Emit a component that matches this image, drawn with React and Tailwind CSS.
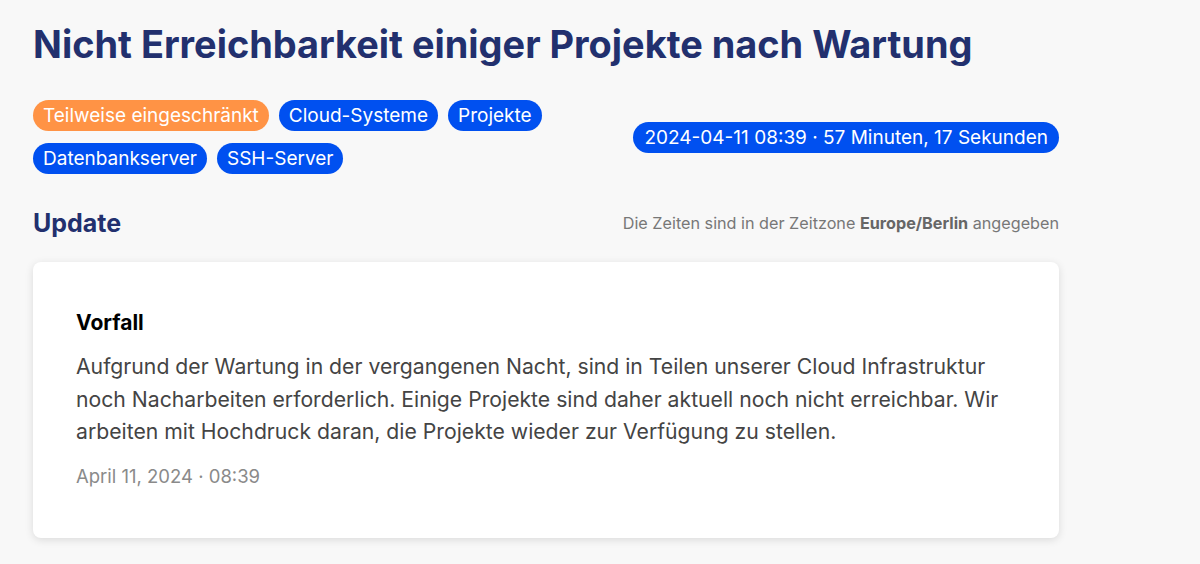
export default function App() {
    const tags = [
        { label: 'Teilweise eingeschränkt', cls: 'bg-[#ff9345]' },
        { label: 'Cloud-Systeme', cls: 'bg-[#0050f0]' },
        { label: 'Projekte', cls: 'bg-[#0050f0]' },
        { label: 'Datenbankserver', cls: 'bg-[#0050f0]' },
        { label: 'SSH-Server', cls: 'bg-[#0050f0]' },
    ];

    return (
        <div className="min-h-[564px] bg-[#f8f8f8] font-['Inter',sans-serif]">
            <div className="w-[1026px] ml-[33px] pt-[20px]">
                <h1 className="text-[37.9px] leading-[48px] font-bold text-[#22306e]">
                    Nicht Erreichbarkeit einiger Projekte nach Wartung
                </h1>

                <div className="mt-[32px] flex items-center justify-between">
                    <div className="flex flex-wrap gap-x-[10px] gap-y-[12px] w-[520px]">
                        {tags.map((t) => (
                            <span
                                key={t.label}
                                className={`${t.cls} text-white text-[19px] leading-[31px] px-[10px] rounded-full`}
                            >
                                {t.label}
                            </span>
                        ))}
                    </div>
                    <span className="bg-[#0050f0] text-white text-[19px] leading-[31px] px-[11px] rounded-full">
                        2024-04-11 08:39 · 57 Minuten, 17 Sekunden
                    </span>
                </div>

                <div className="mt-[32px] flex items-center justify-between">
                    <h2 className="text-[25px] leading-[34px] font-bold text-[#22306e]">Update</h2>
                    <p className="text-[16.2px] text-[#777]">
                        Die Zeiten sind in der Zeitzone <b className="font-bold text-[#666]">Europe/Berlin</b> angegeben
                    </p>
                </div>

                <div className="mt-[22px] bg-white rounded-lg shadow-[0_2px_8px_rgba(0,0,0,0.12)] px-[43px] pt-[46px] pb-[48px]">
                    <h3 className="text-[21px] leading-[30px] font-bold text-black">Vorfall</h3>
                    <p className="mt-[12px] text-[21.2px] leading-[32.5px] text-[#444]">
                        Aufgrund der Wartung in der vergangenen Nacht, sind in Teilen unserer Cloud Infrastruktur
                        noch Nacharbeiten erforderlich. Einige Projekte sind daher aktuell noch nicht erreichbar. Wir
                        arbeiten mit Hochdruck daran, die Projekte wieder zur Verfügung zu stellen.
                    </p>
                    <p className="mt-[14px] text-[18.5px] leading-[28px] text-[#8a8a8a]">April 11, 2024 · 08:39</p>
                </div>
            </div>
        </div>
    );
}
